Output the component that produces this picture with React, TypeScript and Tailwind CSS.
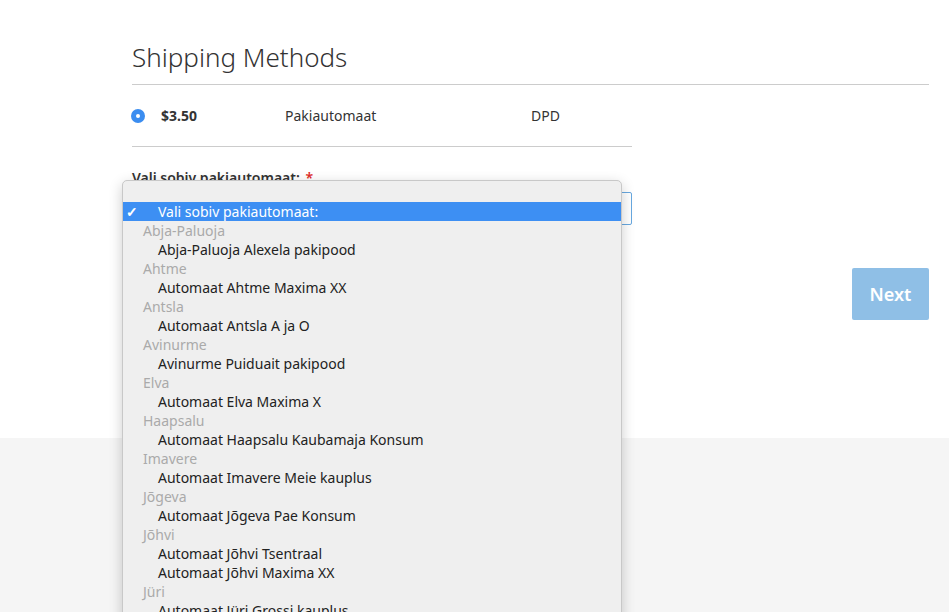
const groups: [string, string[]][] = [
  ["Abja-Paluoja", ["Abja-Paluoja Alexela pakipood"]],
  ["Ahtme", ["Automaat Ahtme Maxima XX"]],
  ["Antsla", ["Automaat Antsla A ja O"]],
  ["Avinurme", ["Avinurme Puiduait pakipood"]],
  ["Elva", ["Automaat Elva Maxima X"]],
  ["Haapsalu", ["Automaat Haapsalu Kaubamaja Konsum"]],
  ["Imavere", ["Automaat Imavere Meie kauplus"]],
  ["Jõgeva", ["Automaat Jõgeva Pae Konsum"]],
  ["Jõhvi", ["Automaat Jõhvi Tsentraal", "Automaat Jõhvi Maxima XX"]],
  ["Jüri", ["Automaat Jüri Grossi kauplus"]],
];

export default function App() {
  return (
    <div className="relative h-[612px] w-[949px] overflow-hidden bg-[#f5f5f5] font-['Open_Sans',sans-serif] text-[#333]">
      <div className="h-[438px] bg-white pl-[132px] pr-[20px] pt-[40px]">
        <h2 className="text-[26px] font-light leading-[34px] text-[#333]">Shipping Methods</h2>
        <div className="mt-[10px] border-b border-[#ccc]" />
        <div className="w-[500px]">
          <div className="flex h-[61px] items-center text-[14px]">
            <span className="ml-[-1px] flex h-[14px] w-[14px] items-center justify-center rounded-full bg-[#3b8df0]">
              <span className="h-[4px] w-[4px] rounded-full bg-white" />
            </span>
            <span className="ml-[16px] w-[124px] font-bold">$3.50</span>
            <span className="w-[246px]">Pakiautomaat</span>
            <span>DPD</span>
          </div>
          <div className="border-b border-[#ccc]" />
          <div className="mt-[20px] text-[14px] font-semibold">
            Vali sobiv pakiautomaat: <span className="ml-[2px] text-[#e02b27]">*</span>
          </div>
          <div className="mt-[4px] h-[33px] rounded-[2px] border border-[#68a8e0] bg-white" />
        </div>
        <div className="mt-[43px] flex justify-end">
          <button className="h-[52px] w-[77px] rounded-[2px] bg-[#8fbfe6] text-[18px] font-semibold text-white">Next</button>
        </div>
      </div>

      <div className="absolute left-[122px] top-[180px] h-[460px] w-[500px] rounded-[5px] border border-[#c8c8c8] bg-[#efefef] pt-[21px] font-['Liberation_Sans',sans-serif] text-[14px] leading-[19px] shadow-[0_4px_14px_rgba(0,0,0,0.2)]">
        <div className="flex h-[19px] items-center bg-[#3d8ff3] text-white">
          <span className="w-[35px] pl-[3px] text-[14px] font-bold">✓</span>
          Vali sobiv pakiautomaat:
        </div>
        {groups.map(([g, items]) => (
          <div key={g}>
            <div className="h-[19px] pl-[20px] text-[#aaa]">{g}</div>
            {items.map((i) => (
              <div key={i} className="h-[19px] pl-[35px] text-[#222]">{i}</div>
            ))}
          </div>
        ))}
      </div>
    </div>
  );
}
